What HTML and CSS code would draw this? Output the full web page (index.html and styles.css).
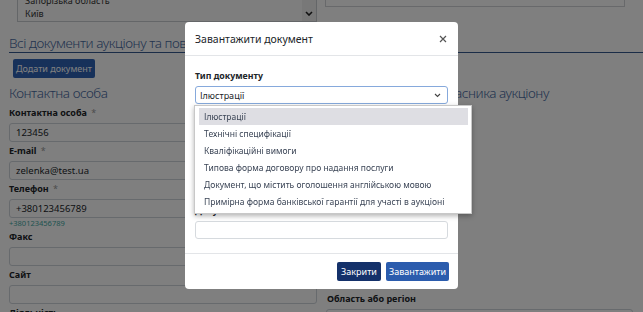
FILE: index.html
```html
<!DOCTYPE html>
<html>
<head>
    <meta charset="utf-8">
    <link rel="stylesheet" href="styles.css">
</head>
<body>
    <div class="page">
        <!-- верхній блок: список регіонів -->
        <div class="top-row">
            <div class="region-list">
                <div class="region-items">
                    <div>Запорізька область</div>
                    <div>Київ</div>
                </div>
                <div class="scrollbar">
                    <svg width="8" height="5" viewBox="0 0 8 5"><polyline points="1,1 4,4 7,1" fill="none" stroke="#222" stroke-width="1.6"/></svg>
                </div>
            </div>
            <div class="top-box"></div>
        </div>

        <h3 class="section-title">Всі документи аукціону та повідомлення</h3>
        <button class="btn-add">Додати документ</button>

        <div class="columns">
            <div class="col">
                <h4 class="col-title">Контактна особа</h4>
                <div class="field">
                    <label>Контактна особа <span class="req">*</span></label>
                    <div class="input">123456</div>
                </div>
                <div class="field">
                    <label>E-mail <span class="req">*</span></label>
                    <div class="input">zelenka@test.ua</div>
                </div>
                <div class="field">
                    <label>Телефон <span class="req">*</span></label>
                    <div class="input">+380123456789</div>
                    <div class="hint">+380123456789</div>
                </div>
                <div class="field">
                    <label>Факс</label>
                    <div class="input"></div>
                </div>
                <div class="field">
                    <label>Сайт</label>
                    <div class="input"></div>
                </div>
                <div class="field">
                    <label>Діяльність</label>
                    <div class="input"></div>
                </div>
            </div>
            <div class="col">
                <h4 class="col-title">Місцезнаходження учасника аукціону</h4>
                <div class="field region-field">
                    <label>Область або регіон</label>
                    <div class="input"></div>
                </div>
            </div>
        </div>
    </div>

    <div class="backdrop"></div>

    <!-- модальне вікно -->
    <div class="modal">
        <div class="modal-header">
            <span class="modal-title">Завантажити документ</span>
            <svg class="close" width="8" height="8" viewBox="0 0 8 8"><path d="M1 1L7 7M7 1L1 7" stroke="#555" stroke-width="1.2"/></svg>
        </div>
        <div class="modal-body">
            <div class="group">
                <label>Тип документу</label>
                <div class="select">
                    <span>Ілюстрації</span>
                    <svg width="7" height="5" viewBox="0 0 7 5"><polyline points="1,1 3.5,3.5 6,1" fill="none" stroke="#444" stroke-width="1.1"/></svg>
                    <ul class="options">
                        <li class="active">Ілюстрації</li>
                        <li>Технічні специфікації</li>
                        <li>Кваліфікаційні вимоги</li>
                        <li>Типова форма договору про надання послуги</li>
                        <li>Документ, що містить оголошення англійською мовою</li>
                        <li>Примірна форма банківської гарантії для участі в аукціоні</li>
                    </ul>
                </div>
            </div>
            <div class="group">
                <label>Назва документу</label>
                <div class="text-input"></div>
            </div>
            <div class="group">
                <label>Файл</label>
                <div class="text-input"></div>
            </div>
            <div class="group">
                <label>Документ</label>
                <div class="text-input"></div>
            </div>
        </div>
        <div class="modal-footer">
            <button class="btn btn-dark">Закрити</button>
            <button class="btn btn-primary">Завантажити</button>
        </div>
    </div>
</body>
</html>
```

FILE: styles.css
```css
body {
    margin: 0;
    background: #ffffff;
    font-family: "Noto Sans", "Open Sans", sans-serif;
    color: #212529;
    overflow: hidden;
}

.page {
    margin-top: -20px; /* сторінка прокручена */
    padding: 0 10px 0 9px;
}

/* верхній блок */
.top-row {
    display: flex;
    align-items: flex-start;
}

.region-list {
    margin-left: 8px;
    width: 300px;
    height: 42px;
    box-sizing: border-box;
    border: 1px solid #c9ccd0;
    display: flex;
    background: #fdfdfd;
}

.region-items {
    flex: 1;
    padding: 13px 7px 0;
    font-size: 9px;
    line-height: 13px;
    color: #333;
}

.scrollbar {
    width: 14px;
    background: #f1f1f1;
    display: flex;
    align-items: flex-end;
    justify-content: center;
    padding-bottom: 5px;
}

.top-box {
    margin-left: 8px;
    width: 300px;
    height: 27px;
    box-sizing: border-box;
    border: 1px solid #d0d3d6;
}

.section-title {
    margin: 12px -10px 0 0;
    font-size: 13.5px;
    letter-spacing: -0.45px;
    line-height: 18px;
    font-weight: 300;
    color: #46689e;
    border-bottom: 1px solid #35598f;
    white-space: nowrap;
}

.btn-add {
    display: block;
    margin: 6px 0 0 4px;
    height: 19px;
    width: 82px;
    padding: 0;
    border: none;
    border-radius: 2px;
    background: #2f63b5;
    color: #fff;
    font-family: inherit;
    font-size: 9px;
}

.columns {
    display: grid;
    grid-template-columns: 308px 1fr;
    column-gap: 9px;
}

.col-title {
    margin: 6px 0 5px;
    font-size: 13.5px;
    letter-spacing: -0.45px;
    line-height: 18px;
    font-weight: 300;
    color: #46689e;
    white-space: nowrap;
}

.field {
    margin-bottom: 3px;
}

.field label {
    display: block;
    font-size: 9px;
    line-height: 12px;
    font-weight: bold;
    margin-bottom: 4px;
}

.req {
    color: #999;
    font-weight: normal;
    margin-left: 2px;
}

.field .input {
    height: 19px;
    box-sizing: border-box;
    border: 1px solid #ced4da;
    border-radius: 3px;
    padding: 0 6px;
    font-size: 9.5px;
    line-height: 17px;
}

.hint {
    font-size: 7.5px;
    line-height: 10px;
    color: #3ea7a2;
}

.region-field {
    margin-top: 191px;
}

.region-field label {
    margin-left: 1px;
}

/* затемнення */
.backdrop {
    position: fixed;
    inset: 0;
    background: rgba(0, 0, 0, 0.5);
}

.modal {
    position: fixed;
    left: 185px;
    top: 22px;
    width: 273px;
    background: #fff;
    border-radius: 4px;
}

.modal-header {
    height: 33px;
    padding: 0 10px;
    display: flex;
    align-items: center;
    justify-content: space-between;
    border-bottom: 1px solid #e3e5e8;
}

.modal-title {
    font-size: 10.5px;
}

.close {
    margin-right: 1px;
}

.modal-body {
    padding: 14px 10px 14px;
}

.group {
    margin-bottom: 11px;
}

.group:last-child {
    margin-bottom: 0;
}

.group label {
    display: block;
    font-size: 8.8px;
    line-height: 12px;
    font-weight: bold;
    margin-bottom: 4px;
}

.select {
    position: relative;
    height: 18px;
    box-sizing: border-box;
    border: 1px solid #86a9dc;
    border-radius: 3px;
    padding: 0 6px 0 4px;
    display: flex;
    align-items: center;
    justify-content: space-between;
    font-size: 9px;
}

.text-input {
    height: 18px;
    box-sizing: border-box;
    border: 1px solid #d6dade;
    border-radius: 3px;
}

/* відкритий список */
.options {
    position: absolute;
    top: 18px;
    left: -2px;
    width: 278px;
    margin: 0;
    padding: 2px 3px 3px 4px;
    box-sizing: border-box;
    list-style: none;
    background: #fff;
    border: 1px solid #c8c8c8;
    box-shadow: 0 2px 5px rgba(0, 0, 0, 0.3);
    z-index: 2;
}

.options li {
    height: 17px;
    line-height: 17px;
    padding-left: 5px;
    font-size: 8.5px;
    color: #3b4556;
    white-space: nowrap;
}

.options li.active {
    background: #dedee3;
}

.modal-footer {
    border-top: 1px solid #e3e5e8;
    padding: 8px 9px;
    display: flex;
    justify-content: flex-end;
    gap: 5px;
}

.btn {
    height: 19px;
    padding: 0;
    border: none;
    border-radius: 2px;
    color: #fff;
    font-family: inherit;
    font-size: 9px;
}

.btn-dark {
    width: 44px;
    background: #14316a;
}

.btn-primary {
    width: 63px;
    background: #2b5cad;
}
```
